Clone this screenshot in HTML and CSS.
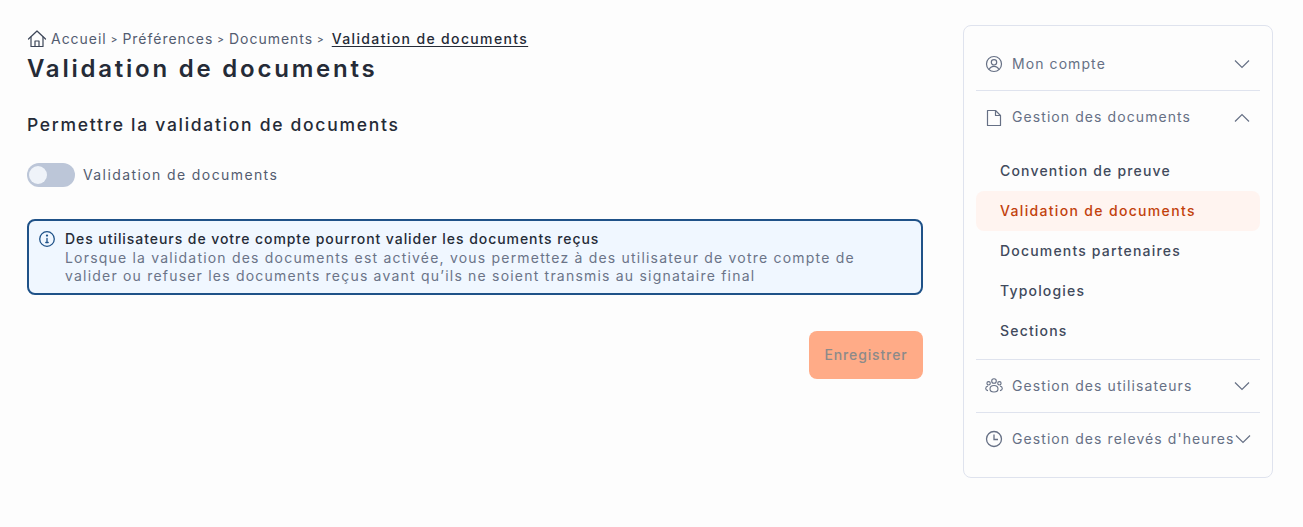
FILE: index.html
```html
<!DOCTYPE html>
<html lang="fr">
<head>
  <meta charset="UTF-8" />
  <title>Validation de documents</title>
  <link rel="stylesheet" href="styles.css">
</head>
<body>
  <div class="page">
    <main class="content">
      <nav class="crumbs">
        <svg class="home-icon" width="20" height="20" viewBox="0 0 20 20" fill="none" stroke="#3d4658" stroke-width="1.2" stroke-linejoin="round" stroke-linecap="round"><path d="M1.5 10 10 2l8.500 8"/><path d="M4 8v9.500h12V8"/><path d="M8 17.500v-5.500h4v5.500"/></svg>
        <a>Accueil</a><span class="sep">&gt;</span>
        <a>Préférences</a><span class="sep">&gt;</span>
        <a>Documents</a><span class="sep">&gt;</span>
        <a class="current">Validation de documents</a>
      </nav>
      <h1>Validation de documents</h1>
      <h2>Permettre la validation de documents</h2>
      <label class="toggle-row">
        <span class="toggle"><span class="knob"></span></span>
        <span class="toggle-label">Validation de documents</span>
      </label>
      <div class="notice">
        <svg class="notice-icon" width="18" height="18" viewBox="0 0 18 18" fill="none" stroke="#1f5288" stroke-width="1.300"><circle cx="9" cy="9" r="7.300"/><path d="M9 8.300v4M7.800 12.500h2.400" stroke-linecap="round"/><circle cx="9" cy="5.600" r=".5" fill="#1f5288"/></svg>
        <div>
          <p class="notice-title">Des utilisateurs de votre compte pourront valider les documents reçus</p>
          <p class="notice-text">Lorsque la validation des documents est activée, vous permettez à des utilisateur de votre compte de<br>valider ou refuser les documents reçus avant qu’ils ne soient transmis au signataire final</p>
        </div>
      </div>
      <div class="actions">
        <button class="save" disabled>Enregistrer</button>
      </div>
    </main>

    <aside class="sidebar">
      <div class="section">
        <svg class="icon" width="18" height="18" viewBox="0 0 18 18" fill="none" stroke="#667085" stroke-width="1.200"><circle cx="9" cy="9" r="7.500"/><circle cx="9" cy="7.300" r="2.700"/><path d="M4.200 14.500c.8-2.200 2.600-3.200 4.800-3.200s4 1 4.800 3.200"/></svg>
        <span class="section-name">Mon compte</span>
        <svg class="chevron" width="16" height="10" viewBox="0 0 16 10" fill="none" stroke="#667085" stroke-width="1.200"><path d="m1 1.500 7 7 7-7"/></svg>
      </div>
      <div class="section">
        <svg class="icon" width="18" height="18" viewBox="0 0 18 18" fill="none" stroke="#667085" stroke-width="1.200" stroke-linejoin="round"><path d="M2.500 1.500h8L15.500 6.500v10h-13z"/><path d="M10.500 1.500v5h5"/></svg>
        <span class="section-name">Gestion des documents</span>
        <svg class="chevron" width="16" height="10" viewBox="0 0 16 10" fill="none" stroke="#667085" stroke-width="1.200"><path d="m1 8.500 7-7 7 7"/></svg>
      </div>
      <ul class="submenu">
        <li>Convention de preuve</li>
        <li class="active">Validation de documents</li>
        <li>Documents partenaires</li>
        <li>Typologies</li>
        <li>Sections</li>
      </ul>
      <div class="section">
        <svg class="icon" width="18" height="18" viewBox="0 0 18 18" fill="none" stroke="#667085" stroke-width="1.100"><circle cx="9" cy="4" r="2.300"/><circle cx="3.600" cy="6.300" r="1.700"/><circle cx="14.400" cy="6.300" r="1.700"/><path d="M5 12c0-2.200 1.800-3.500 4-3.500s4 1.300 4 3.500c0 1.800-1.800 3-4 3s-4-1.200-4-3z"/><path d="M3 9c-1.400.3-2.300 1.300-2.300 2.500 0 1.100.8 1.800 2.300 2.100M15 9c1.400.3 2.300 1.300 2.300 2.500 0 1.100-.8 1.800-2.300 2.100"/></svg>
        <span class="section-name">Gestion des utilisateurs</span>
        <svg class="chevron" width="16" height="10" viewBox="0 0 16 10" fill="none" stroke="#667085" stroke-width="1.200"><path d="m1 1.500 7 7 7-7"/></svg>
      </div>
      <div class="section">
        <svg class="icon" width="18" height="18" viewBox="0 0 18 18" fill="none" stroke="#667085" stroke-width="1.300"><circle cx="9" cy="9" r="7.500"/><path d="M9 4.500V9.500H13"/></svg>
        <span class="section-name">Gestion des relevés d'heures</span>
        <svg class="chevron" width="16" height="10" viewBox="0 0 16 10" fill="none" stroke="#667085" stroke-width="1.200"><path d="m1 1.500 7 7 7-7"/></svg>
      </div>
    </aside>
  </div>
</body>
</html>
```

FILE: styles.css
```css
* {
  box-sizing: border-box;
  font-family: 'Inter', sans-serif;
}
body {
  margin: 0;
  background: #fdfdfd;
  color: #252b37;
}
.page {
  display: flex;
  align-items: flex-start;
  gap: 40px;
  padding: 25px 30px 0 27px;
}
.content {
  width: 896px;
}
.crumbs {
  display: flex;
  align-items: center;
  height: 28px;
  padding-bottom: 1px;
  font-size: 14px;
  letter-spacing: 0.98px;
  color: #535c70;
}
.home-icon {
  margin-right: 4px;
}
.sep {
  margin: 0 4px;
  font-size: 10px;
  font-weight: 500;
}
.current {
  margin-left: 3px;
  color: #252b37;
  font-weight: 500;
  letter-spacing: 1.36px;
  text-decoration: underline;
  text-underline-offset: 2px;
}
h1 {
  margin: 1px 0 0;
  font-size: 24px;
  line-height: 30px;
  font-weight: 600;
  letter-spacing: 2.77px;
}
h2 {
  margin: 29px 0 0;
  font-size: 17.500px;
  line-height: 24px;
  font-weight: 500;
  letter-spacing: 1.71px;
}
.toggle-row {
  display: flex;
  align-items: center;
  gap: 8px;
  margin-top: 26px;
  font-size: 14px;
  letter-spacing: 1.4px;
  color: #535c70;
}
.toggle-label {
  padding-bottom: 2px;
}
.toggle {
  display: flex;
  align-items: center;
  width: 48px;
  height: 24px;
  padding: 2px;
  border-radius: 12px;
  background: #bcc6d8;
}
.knob {
  width: 18px;
  height: 18px;
  border-radius: 50%;
  background: #eff3f9;
}
.notice {
  display: flex;
  gap: 9px;
  margin-top: 32px;
  padding: 9px;
  height: 76px;
  border: 2px solid #1f5288;
  border-radius: 8px;
  background: #f0f7ff;
}
.notice-icon {
  flex: none;
}
.notice p {
  margin: 0;
  font-size: 14px;
  line-height: 18px;
}
.notice-title {
  font-weight: 500;
  letter-spacing: 0.94px;
}
.notice .notice-text {
  margin-top: 1px;
  color: #6b7488;
  letter-spacing: 1.2px;
}
.actions {
  display: flex;
  justify-content: flex-end;
  margin-top: 36px;
}
.save {
  width: 114px;
  height: 48px;
  padding: 0 0 2px;
  border: none;
  border-radius: 8px;
  background: #ffab87;
  color: #8c8a8a;
  font-size: 14px;
  font-weight: 500;
  letter-spacing: 0.86px;
}
.sidebar {
  width: 310px;
  padding: 12px;
  border: 1px solid #dfe3ee;
  border-radius: 8px;
}
.section {
  display: flex;
  align-items: center;
  height: 53px;
  border-bottom: 1px solid #dfe3ee;
  color: #667085;
  font-size: 14px;
  letter-spacing: 1.08px;
}
.section:last-child {
  height: 52px;
  border-bottom: none;
}
.section-name {
  flex: 1;
  padding-bottom: 2px;
  white-space: nowrap;
}
.icon {
  flex: none;
  margin: 0 9px;
}
.chevron {
  flex: none;
  margin-right: 10px;
}
.section:has(+ .submenu) {
  border-bottom: none;
}
.submenu {
  list-style: none;
  margin: 0;
  padding: 7px 0 8px;
  border-bottom: 1px solid #dfe3ee;
}
.submenu li {
  display: flex;
  align-items: center;
  height: 40px;
  padding: 0 0 2px 24px;
  border-radius: 8px;
  font-size: 14px;
  font-weight: 500;
  letter-spacing: 1.18px;
  color: #414a5c;
}
.submenu .active {
  background: #fff4f0;
  color: #c2410c;
  letter-spacing: 1.33px;
}
```
